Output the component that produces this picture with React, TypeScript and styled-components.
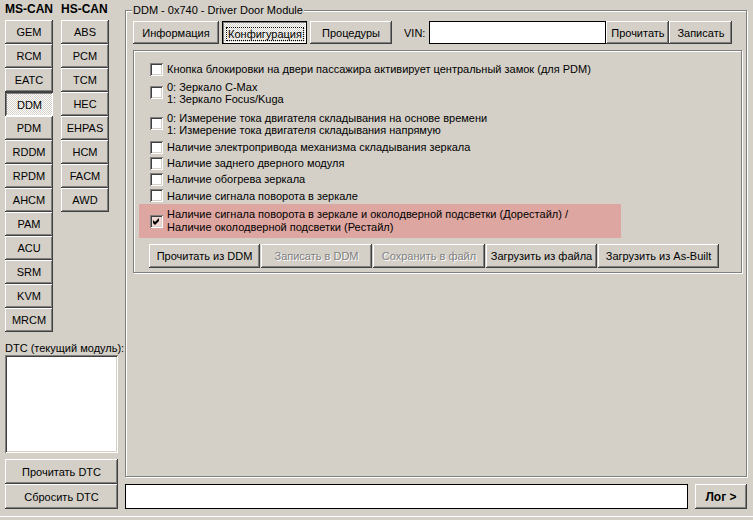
import React from 'react'
import styled, { createGlobalStyle, css } from 'styled-components'

const GlobalStyle = createGlobalStyle`
  html, body {
    margin: 0;
    padding: 0;
    background: #d4d0c8;
  }
  body {
    font-family: "Liberation Sans", Arial, sans-serif;
    font-size: 11px;
    color: #000;
  }
  * {
    box-sizing: border-box;
  }
`

const raised = css`
  background: #d4d0c8;
  box-shadow: inset -1px -1px #404040, inset 1px 1px #fff,
    inset -2px -2px #808080, inset 2px 2px #d4d0c8;
`

const sunken = css`
  background: #fff;
  box-shadow: inset 1px 1px #808080, inset -1px -1px #fff,
    inset 2px 2px #404040, inset -2px -2px #d4d0c8;
`

const dither = css`
  background-color: #fff;
  background-image: conic-gradient(#d4d0c8 25%, #fff 0 50%, #d4d0c8 0 75%, #fff 0);
  background-size: 2px 2px;
`

const Window = styled.div`
  display: flex;
  gap: 7px;
  width: 753px;
  height: 520px;
  padding: 0 6px 0 5px;
  background: #d4d0c8;
  box-shadow: inset 0 -3px 0 #d4d0c8, inset 0 -4px 0 #fff;
  overflow: hidden;
`

const LeftPane = styled.div`
  display: flex;
  flex-direction: column;
  width: 113px;
`

const CanColumns = styled.div`
  display: flex;
  gap: 8px;
  height: 332px;
`

const CanColumn = styled.div`
  display: flex;
  flex-direction: column;
  width: 48px;
`

const CanHeader = styled.div`
  height: 20px;
  line-height: 19px;
  font-size: 12px;
  font-weight: bold;
  white-space: nowrap;
`

const Button = styled.button<{ $w?: number; $h?: number; $pressed?: boolean; $focus?: boolean; $bold?: boolean }>`
  display: flex;
  align-items: center;
  justify-content: center;
  flex: none;
  width: ${(p) => (p.$w ? `${p.$w}px` : '100%')};
  height: ${(p) => p.$h ?? 24}px;
  margin: 0;
  padding: 0;
  border: none;
  font-family: inherit;
  font-size: ${(p) => (p.$bold ? '12px' : '11px')};
  font-weight: ${(p) => (p.$bold ? 'bold' : 'normal')};
  color: #000;
  white-space: nowrap;
  ${(p) =>
    p.$pressed
      ? css`
          ${dither};
          padding: 2px 0 0 1px;
          box-shadow: ${p.$focus
            ? 'inset 0 0 0 1px #000, inset 2px 2px #808080, inset -2px -2px #fff'
            : 'inset 1px 1px #404040, inset -1px -1px #fff, inset 2px 2px #808080'};
        `
      : raised}

  &:disabled {
    color: #808080;
    text-shadow: 1px 1px 0 #fff;
  }
`

const FocusText = styled.span`
  outline: 1px dotted #000;
  padding: 0 1px;
`

const DtcLabel = styled.div`
  margin-top: 9px;
  height: 14px;
  line-height: 14px;
  white-space: nowrap;
`

const ListBox = styled.div`
  ${sunken};
  height: 98px;
  margin-top: 0;
`

const DtcButtons = styled.div`
  display: flex;
  flex-direction: column;
  margin-top: 6px;
`

const RightPane = styled.div`
  display: flex;
  flex-direction: column;
  flex: 1;
`

const GroupBox = styled.div`
  position: relative;
  margin-top: 10px;
  height: 467px;
  padding: 10px 4px 0 7px;
  border: 1px solid #808080;
  box-shadow: inset 1px 1px #fff, 1px 1px #fff;
`

const Legend = styled.span`
  position: absolute;
  top: -8px;
  left: 6px;
  padding: 0 1px;
  line-height: 14px;
  background: #d4d0c8;
  white-space: nowrap;
`

const TabRow = styled.div`
  display: flex;
  align-items: center;
  height: 23px;
`

const Tabs = styled.div`
  display: flex;
  gap: 3px;
`

const VinLabel = styled.span`
  margin: 0 4px 0 12px;
  line-height: 14px;
`

const VinInput = styled.div`
  ${sunken};
  width: 177px;
  height: 23px;
  box-shadow: inset 0 0 0 1px #000;
`

const ConfigPanel = styled.div`
  margin-top: 6px;
  height: 223px;
  padding: 10px 0 0 16px;
  border: 1px solid #808080;
  box-shadow: inset 1px 1px #fff, 1px 1px #fff;
`

const Row = styled.div<{ $h: number }>`
  display: flex;
  align-items: center;
  gap: 4px;
  height: ${(p) => p.$h}px;
  line-height: 12px;
  white-space: nowrap;
`

const HighlightRow = styled(Row)`
  width: 482px;
  margin-left: -11px;
  padding-left: 11px;
  line-height: 13px;
  background: #dea6a0;
`

const Box = styled.span<{ $tint?: boolean }>`
  display: flex;
  align-items: center;
  justify-content: center;
  flex: none;
  width: 13px;
  height: 13px;
  background: ${(p) => (p.$tint ? '#f2d8d4' : '#fff')};
  box-shadow: inset 1px 1px #808080, inset -1px -1px #fff,
    inset 2px 2px #404040, inset -2px -2px #d4d0c8;
`

const Lines = styled.div`
  display: flex;
  flex-direction: column;
`

const ActionRow = styled.div`
  display: flex;
  gap: 1px;
  margin: 6px 0 0 -1px;
`

const BottomRow = styled.div`
  display: flex;
  gap: 7px;
  margin-top: 7px;
`

const LogInput = styled.div`
  ${sunken};
  flex: 1;
  height: 25px;
  box-shadow: inset 0 0 0 1px #000;
`

const msCan = ['GEM', 'RCM', 'EATC', 'DDM', 'PDM', 'RDDM', 'RPDM', 'AHCM', 'PAM', 'ACU', 'SRM', 'KVM', 'MRCM']
const hsCan = ['ABS', 'PCM', 'TCM', 'HEC', 'EHPAS', 'HCM', 'FACM', 'AWD']

const options: { lines: string[]; h: number }[] = [
  { lines: ['Кнопка блокировки на двери пассажира активирует центральный замок (для PDM)'], h: 16 },
  { lines: ['0: Зеркало C-Max', '1: Зеркало Focus/Kuga'], h: 31 },
  {
    lines: [
      '0: Измерение тока двигателя складывания на основе времени',
      '1: Измерение тока двигателя складывания напрямую',
    ],
    h: 31,
  },
  { lines: ['Наличие электропривода механизма складывания зеркала'], h: 16 },
  { lines: ['Наличие заднего дверного модуля'], h: 16 },
  { lines: ['Наличие обогрева зеркала'], h: 16 },
  { lines: ['Наличие сигнала поворота в зеркале'], h: 17 },
]

const actions = [
  { label: 'Прочитать из DDM', w: 111 },
  { label: 'Записать в DDM', w: 111, disabled: true },
  { label: 'Сохранить в файл', w: 112 },
  { label: 'Загрузить из файла', w: 111 },
  { label: 'Загрузить из As-Built', w: 121 },
]

const Check = () => (
  <svg width="7" height="7" viewBox="0 0 7 7">
    <path d="M0 2 L2 4 L6 0 L6 3 L2 7 L0 5 Z" fill="#000" />
  </svg>
)

const ModuleColumn = ({ title, items }: { title: string; items: string[] }) => (
  <CanColumn>
    <CanHeader>{title}</CanHeader>
    {items.map((m) => (
      <Button key={m} $w={48} $pressed={m === 'DDM'}>
        {m}
      </Button>
    ))}
  </CanColumn>
)

export default function App() {
  return (
    <>
      <GlobalStyle />
      <Window>
        <LeftPane>
          <CanColumns>
            <ModuleColumn title="MS-CAN" items={msCan} />
            <ModuleColumn title="HS-CAN" items={hsCan} />
          </CanColumns>
          <DtcLabel>DTC (текущий модуль):</DtcLabel>
          <ListBox />
          <DtcButtons>
            <Button $h={25}>Прочитать DTC</Button>
            <Button $h={25}>Сбросить DTC</Button>
          </DtcButtons>
        </LeftPane>

        <RightPane>
          <GroupBox>
            <Legend>DDM - 0x740 - Driver Door Module</Legend>
            <TabRow>
              <Tabs>
                <Button $w={86} $h={23}>Информация</Button>
                <Button $w={85} $h={23} $pressed $focus>
                  <FocusText>Конфигурация</FocusText>
                </Button>
                <Button $w={82} $h={23}>Процедуры</Button>
              </Tabs>
              <VinLabel>VIN:</VinLabel>
              <VinInput />
              <Button $w={63} $h={23}>Прочитать</Button>
              <Button $w={63} $h={23}>Записать</Button>
            </TabRow>

            <ConfigPanel>
              {options.map((o) => (
                <Row key={o.lines[0]} $h={o.h}>
                  <Box />
                  <Lines>
                    {o.lines.map((l) => (
                      <span key={l}>{l}</span>
                    ))}
                  </Lines>
                </Row>
              ))}
              <HighlightRow $h={34}>
                <Box $tint>
                  <Check />
                </Box>
                <Lines>
                  <span>Наличие сигнала поворота в зеркале и околодверной подсветки (Дорестайл) /</span>
                  <span>Наличие околодверной подсветки (Рестайл)</span>
                </Lines>
              </HighlightRow>
              <ActionRow>
                {actions.map((a, i) => (
                  <Button key={a.label} $w={a.w} disabled={i === 1 || i === 2}>
                    {a.label}
                  </Button>
                ))}
              </ActionRow>
            </ConfigPanel>
          </GroupBox>

          <BottomRow>
            <LogInput />
            <Button $w={52} $h={25} $bold>
              Лог &gt;
            </Button>
          </BottomRow>
        </RightPane>
      </Window>
    </>
  )
}
